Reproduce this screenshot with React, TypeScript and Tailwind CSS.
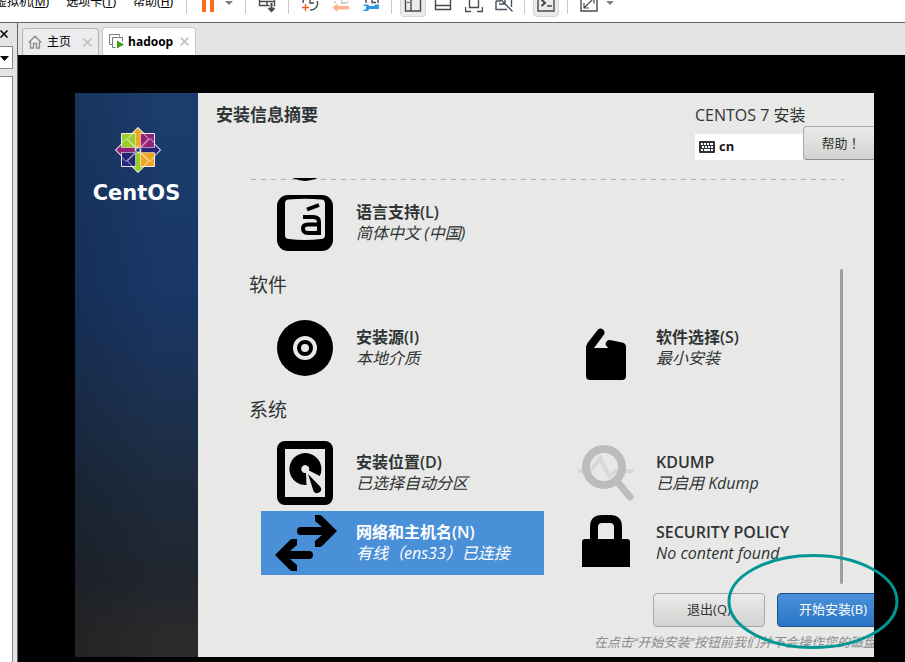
import type { ReactNode } from 'react';
import clsx from 'clsx';

const MENUS = [
    { label: '虚拟机', hotkey: 'M' },
    { label: '选项卡', hotkey: 'T' },
    { label: '帮助', hotkey: 'H' },
];

function ToolIcon({ children }: { children: ReactNode }) {
    return (
        <svg width="18" height="18" viewBox="0 0 18 18" fill="none" stroke="#4a4a4a" strokeWidth="1.4" className="shrink-0">
            {children}
        </svg>
    );
}

function ToolButton({ label, active, children }: { label: string; active?: boolean; children: ReactNode }) {
    return (
        <button
            aria-label={label}
            className={clsx(
                'flex h-6 w-[26px] shrink-0 items-center justify-center rounded-sm border',
                active ? 'border-[#d4d4d6] bg-[#eaebed]' : 'border-transparent',
            )}
        >
            {children}
        </button>
    );
}

function Separator() {
    return <span className="h-[17px] w-px shrink-0 bg-[#c8c8c8]" />;
}

function Caret() {
    return (
        <svg width="8" height="4" viewBox="0 0 8 4" className="shrink-0">
            <path d="M0 0h8L4 4z" fill="#7d7d7d" />
        </svg>
    );
}

function Toolbar() {
    return (
        <header className="flex h-[22px] shrink-0 items-end overflow-hidden bg-white">
            <div className="flex h-[34px] shrink-0 items-center">
                <nav className="-ml-[5px] flex w-[191px] shrink-0 gap-[17px] pb-[6px]">
                    {MENUS.map((m) => (
                        <button key={m.hotkey} className="text-xs whitespace-nowrap text-black">
                            {m.label}(<u>{m.hotkey}</u>)
                        </button>
                    ))}
                </nav>
                <Separator />
                <button aria-label="挂起" className="ml-[15px] flex h-6 items-center gap-[4px]">
                    <span className="h-[13px] w-[4px] bg-[#ff6a1f]" />
                    <span className="h-[13px] w-[4px] bg-[#ff6a1f]" />
                </button>
                <span className="mr-[12px] ml-[11px] flex pb-[4px]">
                    <Caret />
                </span>
                <Separator />
                <div className="flex w-[42px] justify-center">
                    <ToolButton label="发送">
                        <ToolIcon>
                            <path d="M1.500 1h15v8.500h-15zM1.500 5.500h15M9 5.500v4" />
                            <path d="M13.500 8v7M10.500 12l3 3 3-3" stroke="#fff" strokeWidth="4" />
                            <path d="M13.500 7v8M10.500 12l3 3 3-3" strokeWidth="2" />
                        </ToolIcon>
                    </ToolButton>
                </div>
                <Separator />
                <div className="flex w-[102px] items-center gap-[5px] pl-[8px]">
                    <ToolButton label="拍摄快照">
                        <ToolIcon>
                            <path d="M2 7a7 7 0 0 1 1-4M16 5a7 6.500 0 0 1-7 9M9 1v6h4" />
                            <path d="M4.500 8v7M1 11.500h7" stroke="#f05a28" />
                        </ToolIcon>
                    </ToolButton>
                    <ToolButton label="恢复快照">
                        <ToolIcon>
                            <path d="M3 7.500V5M15.500 7.500V5M9.500 2v5H14" stroke="#c4c4c4" />
                            <path d="M0.500 11.500l5-4v2.500h11.500v3.500H5.500V16z" fill="#ffb08a" stroke="none" />
                        </ToolIcon>
                    </ToolButton>
                    <ToolButton label="管理快照">
                        <ToolIcon>
                            <path d="M3 7V4M15 7V4M9 2v4.500h4" />
                            <path
                                d="M0.500 8.500H5L6.500 10H11l1.500-1.500H16V13h-3.500L11 13H6.500L5 15H0.500v-1.500H3v-3.500H0.500z"
                                fill="#2a9be0"
                                stroke="none"
                            />
                        </ToolIcon>
                    </ToolButton>
                </div>
                <Separator />
                <div className="flex w-[132px] items-center justify-between pr-[7px] pl-[8px]">
                    <ToolButton label="显示库" active>
                        <ToolIcon>
                            <path d="M1.500 -1h15v16h-15zM7 -1v16" />
                            <path d="M3 3.500h2.500M3 6.500h2.500" strokeWidth="1" />
                        </ToolIcon>
                    </ToolButton>
                    <ToolButton label="缩略图">
                        <ToolIcon>
                            <path d="M1.500 -1h15v14.500h-15zM1.500 9.500h15" />
                        </ToolIcon>
                    </ToolButton>
                    <ToolButton label="全屏">
                        <ToolIcon>
                            <path d="M4.500 2h9v9.500h-9zM0.500 11v4.500H6M17.500 11v4.500H12" />
                        </ToolIcon>
                    </ToolButton>
                    <ToolButton label="Unity">
                        <ToolIcon>
                            <path d="M1 5v8.500h11M4 8h6V3M16.500 2v9M1 5h5M1.500 -1L17.500 15.500" stroke="#47525c" />
                        </ToolIcon>
                    </ToolButton>
                </div>
                <Separator />
                <div className="flex w-[42px] justify-center">
                    <ToolButton label="控制台" active>
                        <ToolIcon>
                            <path d="M1 -1h16v16H1zM10 10h5" />
                            <path d="M4.500 3.500l3.500 3.500-3.500 3" strokeWidth="2" />
                        </ToolIcon>
                    </ToolButton>
                </div>
                <Separator />
                <div className="mr-[4px] flex w-[34px] justify-end">
                    <ToolButton label="自由拉伸">
                        <ToolIcon>
                            <path d="M1 -1h16v16H1z" />
                            <path d="M4 7v5h5M4 12l9-9M9 2.500h5v5" strokeWidth="1.200" />
                        </ToolIcon>
                    </ToolButton>
                </div>
                <span className="flex pb-[4px]">
                    <Caret />
                </span>
            </div>
        </header>
    );
}

function CloseIcon({ size, color }: { size: number; color: string }) {
    return (
        <svg width={size} height={size} viewBox="0 0 8 8" className="shrink-0">
            <path d="M0.500 0.500l7 7M7.500 0.500l-7 7" stroke={color} strokeWidth="1.500" />
        </svg>
    );
}

function LibraryStrip() {
    return (
        <aside className="flex w-[18px] shrink-0 flex-col border-r border-[#606368] bg-[#e3e4e6] pt-[7px]">
            <button aria-label="关闭库" className="flex h-2 w-2">
                <CloseIcon size={8} color="#000" />
            </button>
            <div className="relative mt-[8px] h-[23px] w-[13px] shrink-0 border border-l-0 border-[#85878b] bg-white">
                <select aria-label="搜索" className="h-full w-full appearance-none" />
                <svg width="9" height="5" viewBox="0 0 9 5" className="pointer-events-none absolute top-[9px] left-0">
                    <path d="M0 0h9L4.500 5z" fill="#000" />
                </svg>
            </div>
            <div className="mt-[7px] w-[13px] flex-1 border-t border-r border-[#85878b] bg-white" />
        </aside>
    );
}

function Tabs() {
    return (
        <div className="flex h-8 shrink-0 items-end gap-[3px] bg-[#e3e4e6] pl-[4px]">
            <div className="flex h-[27px] w-[77px] items-center rounded-t border border-b-0 border-[#b2b3b6] bg-[#ececef] pl-[5px]">
                <button className="flex items-center gap-[5px] text-xs text-black">
                    <svg width="14" height="14" viewBox="0 0 14 14" fill="none" stroke="#8b8b8b" strokeWidth="1.300">
                        <path d="M0.700 7.500L7 1.200l6.300 6.300M2.500 6.500V13h3V8.500h3V13h3V6.500" />
                    </svg>
                    主页
                </button>
                <button aria-label="关闭主页" className="ml-[12px]">
                    <CloseIcon size={9} color="#c3c3c3" />
                </button>
            </div>
            <div className="flex h-7 w-[94px] items-center rounded-t border border-b-0 border-[#c6c7ca] bg-white pl-[6px]">
                <button className="flex items-center gap-[4px] font-['Open_Sans'] text-xs font-bold text-black">
                    <svg width="15" height="15" viewBox="0 0 15 15" fill="none" stroke="#7a7a7a">
                        <path d="M3 10.500H0.500v-10h10v2M6.500 13.500h-3v-10h10v4" />
                        <path d="M8 6.500l7 4-7 4z" fill="#3f9c14" stroke="none" />
                    </svg>
                    hadoop
                </button>
                <button aria-label="关闭 hadoop" className="ml-[7px]">
                    <CloseIcon size={9} color="#c3c3c3" />
                </button>
            </div>
        </div>
    );
}

function CentosMark() {
    return (
        <svg width="48" height="46" viewBox="-25 -23 48 46" stroke="#fff" strokeWidth="0.900">
            <path d="M-16.500 -16.500H0V0h-16.500z" fill="#9ccd2a" />
            <path d="M0 -16.500h16.500V0H0z" fill="#932279" />
            <path d="M-16.500 0H0v16.500h-16.500z" fill="#262577" />
            <path d="M0 0h16.500v16.500H0z" fill="#efa724" />
            <path d="M0 -22.500l6 6H2.500V-3h-5v-13.500H-6z" fill="#efa724" strokeWidth="0.500" />
            <path d="M0 22.500l6-6H2.500V3h-5v13.500H-6z" fill="#9ccd2a" strokeWidth="0.500" />
            <path d="M-22.500 0l6-6v3.500H-3v5h-13.500V6z" fill="#932279" strokeWidth="0.500" />
            <path d="M22.500 0l-6-6v3.500H3v5h13.500V6z" fill="#262577" strokeWidth="0.500" />
            <path
                d="M-6 -16.500L0 -22.500L6 -16.500M-6 16.500L0 22.500L6 16.500M-16.500 -6L-22.500 0L-16.500 6M16.500 -6L22.500 0L16.500 6"
                fill="none"
            />
            <path
                d="M-3 -2.500L-12 -11.500L-16.500 -7M3 -2.500L12 -11.500L16.500 -7M-3 2.500L-12 11.500L-16.500 7M3 2.500L12 11.500L16.500 7M-2.500 -3L-10.500 -11L-6 -16M2.500 -3L10.500 -11L6 -16M-2.500 3L-10.500 11L-6 16M2.500 3L10.500 11L6 16"
                fill="none"
                strokeOpacity="0.700"
            />
            <path d="M-2 -2h4v4h-4z" fill="#1b3a69" strokeWidth="0.700" />
        </svg>
    );
}

function SpokeIcon({ children }: { children: ReactNode }) {
    return (
        <svg width="64" height="64" viewBox="0 0 64 64" className="shrink-0">
            {children}
        </svg>
    );
}

const ICONS = {
    clock: <circle cx="32" cy="32" r="28" />,
    language: (
        <>
            <rect x="4" y="4" width="56" height="56" rx="11" />
            <path d="M16 8.500Q32 7 48 8.500q4 0 4 4V44q0 4-4 4-16 2-32 0-4 0-4-4V12.500q0-4 4-4z" fill="#e8e8e6" />
            <path
                d="M34 18.500l12-4.500M30 26h10q6 0 6 5v11H35q-5 0-5-4.500 0-4 5-4h11"
                fill="none"
                stroke="#000"
                strokeWidth="4"
            />
        </>
    ),
    disc: (
        <>
            <circle cx="32" cy="32" r="28" />
            <circle cx="32" cy="32" r="10" fill="none" stroke="#e8e8e6" strokeWidth="4" />
            <circle cx="32" cy="32" r="4" fill="#e8e8e6" />
        </>
    ),
    pkg: (
        <path d="M13 33v27q0 4 4 4h32q4 0 4-4V31q0-4-4-4.500L37 24a3.800 3.800 0 0 0-2.500 7l0.500 1H21L31 18.500a4 4 0 0 0-6-5L14.500 27Q13 29 13 33z" />
    ),
    drive: (
        <>
            <rect x="8" y="4" width="48" height="56" rx="4" fill="none" stroke="#000" strokeWidth="8" />
            <path d="M33.500 44A16 16 0 1 1 46.800 35L36 29.500A4 4 0 1 0 33 32z" />
            <path d="M35 33L47.500 46a4 4 0 1 1-7 4z" />
        </>
    ),
    arrows: (
        <>
            <path d="M28 16h21l-7-6V4h4q2 0 3 1l15 15-15 15q-1 1-3 1h-4v-6l7-6H28a4 4 0 0 1 0-8z" />
            <path d="M36 40H17l7-6v-6h-4q-2 0-3 1L2 44l15 15q1 1 3 1h4v-6l-7-6h19a4 4 0 0 0 0-8z" />
        </>
    ),
    kdump: (
        <>
            <path d="M5 30h10l5-3 7-10 9 18 7-5h18" fill="none" stroke="#d8d8d6" strokeWidth="4" />
            <circle cx="31" cy="26" r="18" fill="none" stroke="#bcbcbc" strokeWidth="8" />
            <path d="M43 39l14 17" stroke="#bcbcbc" strokeWidth="7" strokeLinecap="round" />
        </>
    ),
    lock: (
        <>
            <path d="M21 32V16q0-8 8-8h8q8 0 8 8v16" fill="none" stroke="#000" strokeWidth="8" />
            <path d="M9 31q0-3 3-3h42q3 0 3 3v25H9z" />
        </>
    ),
};

interface SpokeProps {
    icon: keyof typeof ICONS;
    title: string;
    status: string;
    selected?: boolean;
}

function Spoke({ icon, title, status, selected }: SpokeProps) {
    return (
        <button
            className={clsx(
                'flex h-16 items-center gap-[19px] pl-[12px] text-left whitespace-nowrap',
                selected ? 'bg-[#4a90d9] text-white' : 'text-[#2e3436]',
            )}
        >
            <SpokeIcon>{ICONS[icon]}</SpokeIcon>
            <span className="flex flex-col">
                <span className="text-base leading-[21px] font-semibold">{title}</span>
                <span className="text-base leading-[21px] italic">{status}</span>
            </span>
        </button>
    );
}

function SectionTitle({ children }: { children: ReactNode }) {
    return <h2 className="-ml-[12px] flex h-[61px] items-center text-[19px] text-[#2e3436]">{children}</h2>;
}

function Installer() {
    return (
        <div className="flex min-h-0 flex-1 overflow-hidden font-['Open_Sans','Noto_Sans_CJK_SC',sans-serif]">
            <div className="flex w-[123px] shrink-0 flex-col items-center bg-[linear-gradient(to_right,#00000026,#00000000_70%),linear-gradient(to_bottom,#1c3d6e,#183767_35%,#1c3254_52%,#1d2b3d_70%,#21262f_86%,#2a2a2b_96%)] pt-[34px]">
                <CentosMark />
                <span className="mt-[6px] font-['DejaVu_Sans'] text-[21px] leading-[28px] font-bold text-white">CentOS</span>
            </div>

            <div className="flex min-w-0 flex-1 flex-col overflow-hidden bg-[#e8e8e6]">
                <div className="flex h-[85px] shrink-0 justify-between pt-[11px] pl-[18px]">
                    <h1 className="text-[17px] leading-[22px] font-bold text-[#2e3436]">安装信息摘要</h1>
                    <div className="-mr-[15px] flex w-[194px] shrink-0 flex-col">
                        <p className="text-base leading-[22px] text-[#2e3436]">CENTOS 7 安装</p>
                        <div className="flex items-end">
                            <div className="flex h-[26px] w-[108px] items-center gap-[4px] bg-white pl-[4px] text-[13px] font-bold text-[#1a1a1a]">
                                <svg width="16" height="12" viewBox="0 0 16 12">
                                    <rect width="16" height="12" rx="1" fill="#2e3436" />
                                    <path
                                        d="M2 2h2v2H2zM5 2h2v2H5zM8 2h2v2H8zM11 2h3v2h-3zM3 5h2v2H3zM6 5h2v2H6zM9 5h2v2H9zM12 5h2v2h-2zM2 8h2v2H2zM5 8h6v2H5zM12 8h2v2h-2z"
                                        fill="#fff"
                                    />
                                </svg>
                                cn
                            </div>
                            <button className="h-[34px] flex-1 rounded-sm border border-[#a8a8a6] border-b-[#8c8c8a] bg-linear-to-b from-[#ebebea] to-[#d2d2d0] pr-[10px] font-['Noto_Sans_CJK_TC'] text-[13px] text-[#2e3436] [text-spacing-trim:space-all]">
                                帮助！
                            </button>
                        </div>
                    </div>
                </div>

                <div className="relative min-h-0 flex-1 pr-[30px] pl-[63px]">
                    <svg className="absolute top-px left-[53px] h-px w-[calc(100%-83px)]">
                        <path d="M0 0.500h2000" stroke="#b4b4b2" strokeDasharray="5 5" />
                    </svg>
                    <div className="relative mb-[6px] flex h-[7px] items-end overflow-hidden pl-[12px]">
                        <SpokeIcon>{ICONS.clock}</SpokeIcon>
                    </div>
                    <div className="grid grid-cols-2 gap-x-[17px]">
                        <Spoke icon="language" title="语言支持(L)" status="简体中文 (中国)" />
                    </div>
                    <SectionTitle>软件</SectionTitle>
                    <div className="grid grid-cols-2 gap-x-[17px]">
                        <Spoke icon="disc" title="安装源(I)" status="本地介质" />
                        <Spoke icon="pkg" title="软件选择(S)" status="最小安装" />
                    </div>
                    <SectionTitle>系统</SectionTitle>
                    <div className="grid grid-cols-2 gap-x-[17px] gap-y-[6px]">
                        <Spoke icon="drive" title="安装位置(D)" status="已选择自动分区" />
                        <Spoke icon="kdump" title="KDUMP" status="已启用 Kdump" />
                        <Spoke icon="arrows" title="网络和主机名(N)" status="有线（ens33）已连接" selected />
                        <Spoke icon="lock" title="SECURITY POLICY" status="No content found" />
                    </div>
                    <div className="absolute top-[91px] right-[31px] bottom-[9px] w-[3px] rounded-full bg-[#9a9fa0]" />
                </div>

                <div className="-mr-[15px] flex shrink-0 flex-col items-end pb-[5px]">
                    <div className="flex gap-3">
                        <button className="h-[34px] w-28 rounded-sm border border-[#a8a8a6] bg-linear-to-b from-[#ebebea] to-[#d2d2d0] text-[13px] text-[#2e3436]">
                            退出(Q)
                        </button>
                        <button className="h-[34px] w-28 rounded-sm border border-[#1c5187] bg-linear-to-b from-[#4a90d9] to-[#2a76c6] text-[13px] text-white">
                            开始安装(B)
                        </button>
                    </div>
                    <p className="mt-[5px] text-[13px] leading-[20px] whitespace-nowrap text-[#8b8e8f] italic">
                        在点击“开始安装”按钮前我们并不会操作您的磁盘。
                    </p>
                </div>
            </div>
        </div>
    );
}

export default function App() {
    return (
        <div className="flex h-screen flex-col overflow-hidden font-['Noto_Sans','Noto_Sans_CJK_SC',sans-serif]">
            <Toolbar />
            <div className="flex min-h-0 flex-1 border-t border-[#606368]">
                <LibraryStrip />
                <main className="flex min-w-0 flex-1 flex-col">
                    <Tabs />
                    <div className="relative flex min-h-0 flex-1 flex-col bg-black pt-[38px] pr-[31px] pb-[5px] pl-[57px]">
                        <Installer />
                        <svg width="172" height="97" viewBox="0 0 172 97" className="pointer-events-none absolute right-[6px] bottom-[12px]">
                            <ellipse cx="86" cy="48.500" rx="84" ry="46" fill="none" stroke="#009696" strokeWidth="3" />
                        </svg>
                    </div>
                </main>
            </div>
        </div>
    );
}
